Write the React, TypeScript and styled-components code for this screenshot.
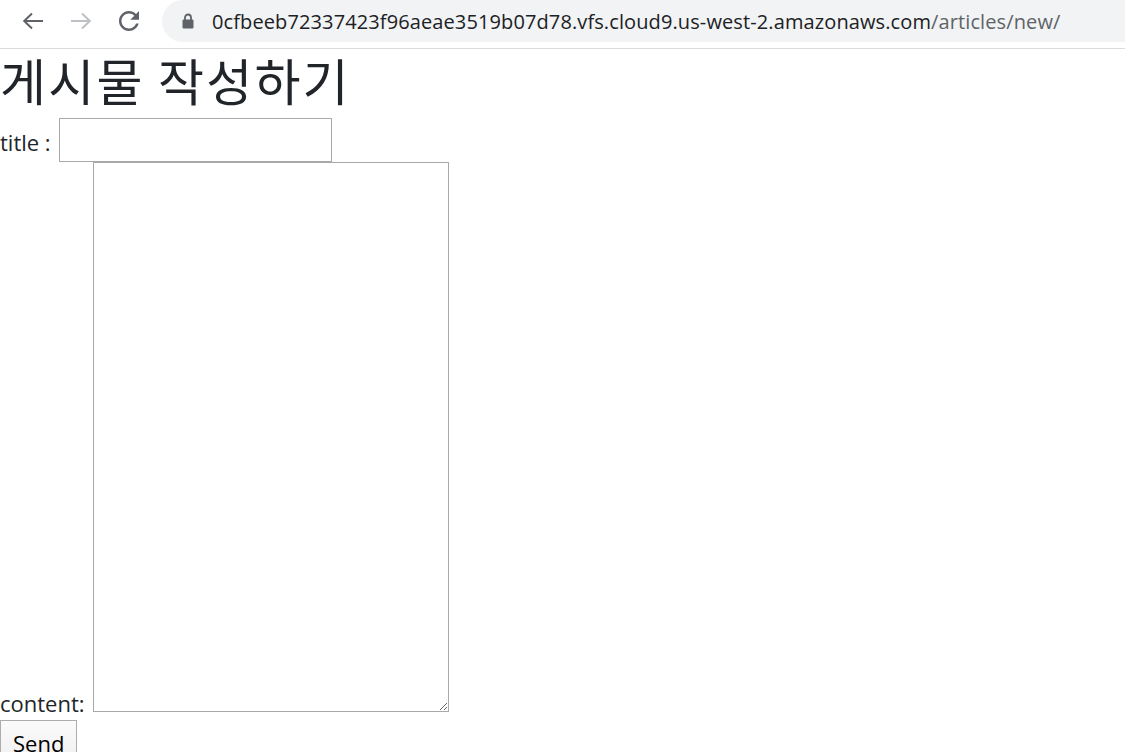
import React from "react";
import styled, { createGlobalStyle } from "styled-components";

const Global = createGlobalStyle`
  html, body { margin: 0; padding: 0; background: #fff; }
  body {
    font-family: "Open Sans", "Noto Sans CJK KR", sans-serif;
    color: #212529;
    font-size: 22px;
    overflow: hidden;
  }
`;

const Page = styled.div`
  display: flex;
  flex-direction: column;
  width: 1125px;
  height: 752px;
  overflow: hidden;
`;

const Toolbar = styled.header`
  display: flex;
  align-items: center;
  height: 48px;
  border-bottom: 1px solid #dadce0;
  background: #fff;
  flex-shrink: 0;
`;

const NavButton = styled.span`
  display: flex;
  align-items: center;
  justify-content: center;
  width: 48px;
  height: 42px;
  flex-shrink: 0;
`;

const NavGroup = styled.div`
  display: flex;
  align-items: flex-start;
  align-self: flex-start;
  padding-left: 9px;
`;

const Omnibox = styled.div`
  display: flex;
  align-items: center;
  align-self: flex-start;
  height: 42px;
  margin-left: 9px;
  flex: 1;
  background: #f1f3f4;
  border-radius: 21px 0 0 21px;
  padding-left: 20px;
  min-width: 0;
`;

const Url = styled.span`
  font-family: "Open Sans", sans-serif;
  font-size: 20px;
  color: #202124;
  white-space: nowrap;
  margin-left: 18px;
  letter-spacing: 0.11px;
`;

const UrlPath = styled.span`
  color: #5f6368;
`;

const Main = styled.main`
  display: flex;
  flex-direction: column;
  align-items: flex-start;
`;

const Heading = styled.h1`
  margin: 0 0 9px;
  font-family: "Noto Sans CJK KR", sans-serif;
  font-weight: 400;
  font-size: 50px;
  line-height: 60px;
  color: #212529;
  letter-spacing: 2.2px;
`;

const FieldRow = styled.div`
  display: flex;
  align-items: center;
`;

const ContentRow = styled.div`
  display: flex;
  align-items: flex-end;
`;

const Label = styled.label`
  font-size: 22px;
  line-height: 26px;
  white-space: pre;
  margin-top: 4px;
  padding-right: 3px;
`;

const ContentLabel = styled(Label)`
  line-height: 22px;
  margin-bottom: -2px;
`;

const TextInput = styled.input`
  box-sizing: border-box;
  width: 273px;
  height: 44px;
  margin: 0;
  border: 1px solid #a9a9a9;
  border-radius: 0;
  font-size: 20px;
  padding: 2px 4px;
  outline: none;
`;

const TextArea = styled.textarea`
  box-sizing: border-box;
  width: 356px;
  height: 550px;
  margin: 0;
  border: 1px solid #a9a9a9;
  border-radius: 0;
  font-size: 20px;
  padding: 2px;
  outline: none;
`;

const SendButton = styled.button`
  margin-top: 8px;
  box-sizing: border-box;
  height: 44px;
  padding: 0 12px;
  font-family: "Open Sans", sans-serif;
  font-size: 22px;
  line-height: 44px;
  color: #000;
  background: linear-gradient(#fbfbfb, #efefef);
  border: 1px solid #adadad;
  border-radius: 0;
`;

const Back = () => (
  <svg width="24" height="20" viewBox="0 0 24 20" fill="none" stroke="#5f6368" strokeWidth="2">
    <path d="M22 10H3.5" />
    <path d="M11 2.5L3.2 10 11 17.5" />
  </svg>
);

const Forward = () => (
  <svg width="24" height="20" viewBox="0 0 24 20" fill="none" stroke="#bdc1c6" strokeWidth="2">
    <path d="M2 10H20.5" />
    <path d="M13 2.5L20.8 10 13 17.5" />
  </svg>
);

const Reload = () => (
  <svg width="30" height="30" viewBox="0 0 24 24" fill="#5f6368">
    <path d="M17.65 6.35C16.2 4.9 14.21 4 12 4c-4.42 0-7.99 3.58-7.99 8s3.57 8 7.99 8c3.73 0 6.84-2.55 7.73-6h-2.08c-.82 2.33-3.04 4-5.65 4-3.31 0-6-2.69-6-6s2.69-6 6-6c1.66 0 3.14.69 4.22 1.78L13 11h7V4l-2.35 2.35z" />
  </svg>
);

const Lock = () => (
  <svg width="12" height="16" viewBox="0 0 12 16">
    <path d="M3 7V4.5a3 3 0 0 1 6 0V7" fill="none" stroke="#5f6368" strokeWidth="1.8" />
    <rect x="0.5" y="6.5" width="11" height="9" rx="1.2" fill="#5f6368" />
  </svg>
);

export default function App() {
  return (
    <Page>
      <Global />
      <Toolbar>
        <NavGroup>
          <NavButton><Back /></NavButton>
          <NavButton><Forward /></NavButton>
          <NavButton><Reload /></NavButton>
        </NavGroup>
        <Omnibox>
          <Lock />
          <Url>
            0cfbeeb72337423f96aeae3519b07d78.vfs.cloud9.us-west-2.amazonaws.com
            <UrlPath>/articles/new/</UrlPath>
          </Url>
        </Omnibox>
      </Toolbar>
      <Main>
        <Heading>게시물 작성하기</Heading>
        <FieldRow>
          <Label htmlFor="title">{"title : "}</Label>
          <TextInput id="title" type="text" />
        </FieldRow>
        <ContentRow>
          <ContentLabel htmlFor="content">{"content: "}</ContentLabel>
          <TextArea id="content" />
        </ContentRow>
        <SendButton type="button">Send</SendButton>
      </Main>
    </Page>
  );
}
